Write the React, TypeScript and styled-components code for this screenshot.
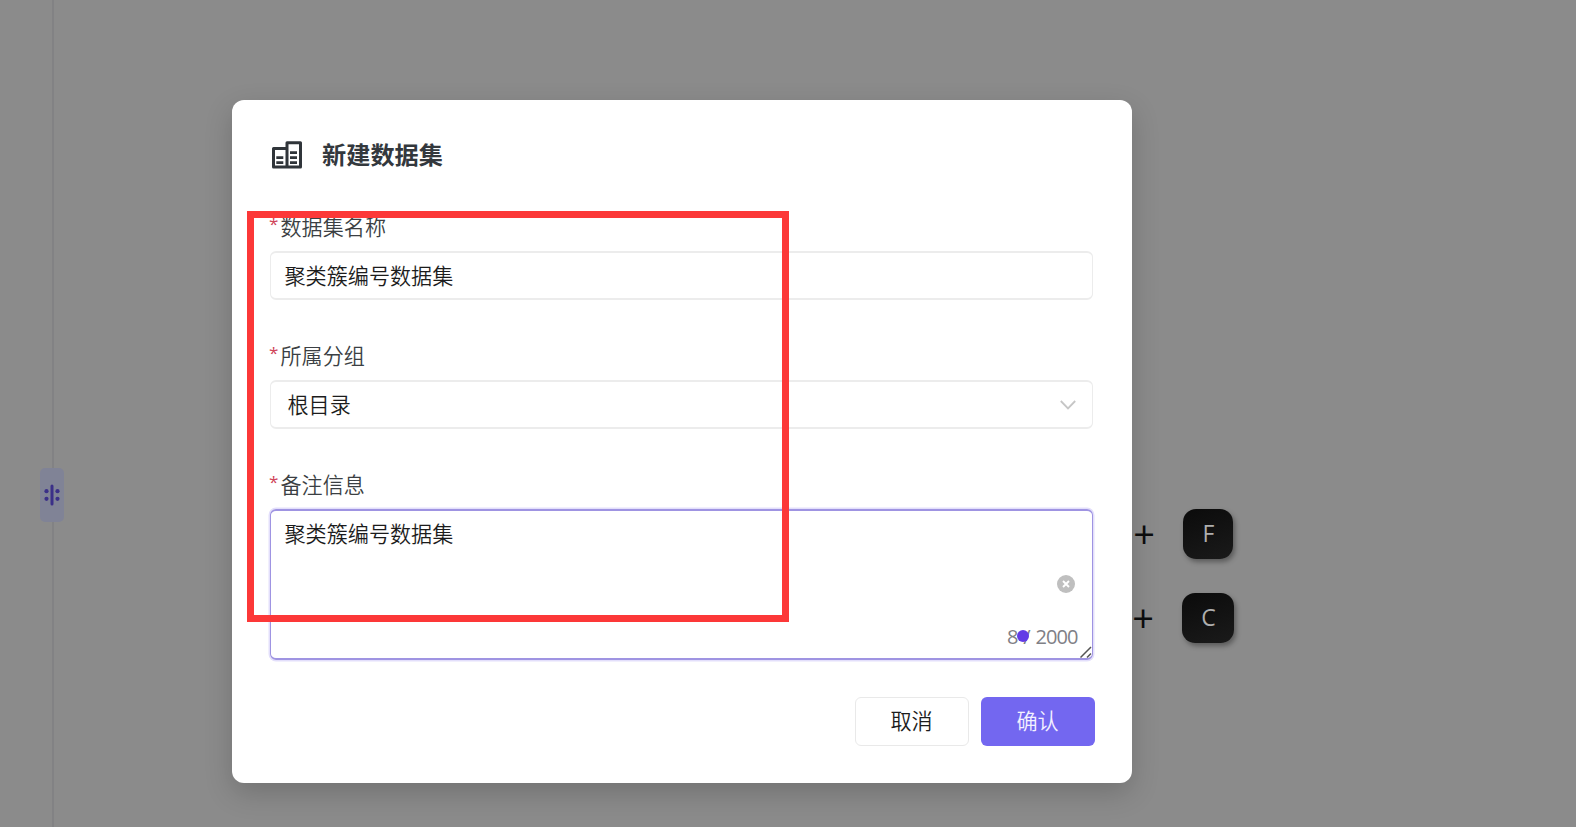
import React from 'react';
import styled, { createGlobalStyle } from 'styled-components';

const GlobalStyle = createGlobalStyle`
  *, *::before, *::after { box-sizing: border-box; }
  body {
    margin: 0;
    overflow: hidden;
    background: #8b8b8b;
    font-family: 'Open Sans', 'Noto Sans CJK SC', sans-serif;
  }
  button { font: inherit; }
`;

const Page = styled.div`
  position: relative;
  display: flex;
  width: 1576px;
  height: 827px;
  overflow: hidden;
  background: #8b8b8b;
`;

const Sidebar = styled.aside`
  position: relative;
  flex: none;
  width: 54px;
  border-right: 2px solid #828284;
`;

const ResizeHandle = styled.div`
  position: absolute;
  left: 40px;
  top: 468px;
  display: flex;
  align-items: center;
  justify-content: center;
  width: 24px;
  height: 54px;
  border-radius: 5px;
  background: #808396;
`;

const Workspace = styled.main`
  flex: 1;
  display: flex;
  flex-direction: column;
  align-items: flex-end;
  gap: 34px;
  padding: 509px 342px 0 0;
`;

const Shortcut = styled.div<{ $inset: number }>`
  display: flex;
  align-items: center;
  height: 50px;
  gap: 28px;
  padding-right: ${(p) => p.$inset}px;
`;

const Plus = styled.span`
  color: #0c0d0e;
  font-size: 38px;
  font-weight: 400;
  line-height: 50px;
  padding-bottom: 2px;
`;

const Key = styled.kbd<{ $width: number }>`
  display: flex;
  align-items: center;
  justify-content: center;
  width: ${(p) => p.$width}px;
  height: 50px;
  border-radius: 13px;
  background: linear-gradient(160deg, #0b0b0b, #1a1a1a);
  box-shadow: 2px 3px 5px rgba(0, 0, 0, 0.35);
  color: #aeaeae;
  font: 23px/50px 'Open Sans', sans-serif;
  padding: 0 0 3px 1px;
`;

const Overlay = styled.div`
  position: absolute;
  inset: 0;
  padding: 99.5px 0 0 232px;
`;

const Dialog = styled.section`
  display: flex;
  flex-direction: column;
  width: 900px;
  height: 683px;
  padding: 35.5px 37px 36.5px 38px;
  border-radius: 12px;
  background: #fff;
  box-shadow: 0 10px 28px rgba(0, 0, 0, 0.18);
`;

const Header = styled.header`
  display: flex;
  align-items: center;
  gap: 20px;
  height: 39px;
  padding-left: 2px;
`;

const Title = styled.h2`
  margin: 0;
  color: #33383d;
  font-size: 24.2px;
  line-height: 39px;
  font-weight: 700;
`;

const Form = styled.form`
  display: flex;
  flex-direction: column;
  flex: 1;
  padding-top: 37px;
`;

const Field = styled.div`
  display: flex;
  flex-direction: column;
  width: 823px;
  margin-bottom: 40px;

  &:last-child { margin-bottom: 0; }
`;

const Label = styled.label`
  display: flex;
  gap: 3px;
  height: 40px;
  color: #3b3f43;
  font-size: 21.1px;
  line-height: 32px;
  font-weight: 350;
`;

const Required = styled.span`
  width: 7.5px;
  color: #cf4458;
  font-size: 17px;
  line-height: 26px;
  text-indent: -1px;
  font-weight: 500;
`;

const Control = styled.div<{ $indent: number }>`
  display: flex;
  align-items: center;
  justify-content: space-between;
  height: 49px;
  padding: 0 16.5px 0 ${(p) => p.$indent}px;
  border: solid #ececec;
  border-width: 2px 1px;
  border-radius: 6px;
  color: #1c1c1c;
  font-size: 21.1px;
  line-height: 30px;
  font-weight: 350;
`;

const TextBox = styled.div`
  position: relative;
  height: 151px;
  padding: 8px 13.5px;
  border: solid #9f94e2;
  border-width: 2px 1px;
  border-radius: 6px;
  box-shadow: 0 0 0 1.5px #e3dffb;
  color: #1c1c1c;
  font-size: 21.1px;
  line-height: 30px;
  font-weight: 350;
`;

const Clear = styled.span`
  position: absolute;
  right: 17px;
  top: 64px;
  display: flex;
`;

const Counter = styled.span`
  position: absolute;
  right: 14.5px;
  bottom: 7px;
  color: #808086;
  font: 20px/28px 'Open Sans', sans-serif;
  letter-spacing: -0.95px;
  word-spacing: 1.6px;
`;

const PointerDot = styled.i`
  position: absolute;
  left: 746px;
  top: 118.5px;
  width: 12px;
  height: 12px;
  border-radius: 50%;
  background: #623be6;
`;

const Grip = styled.span`
  position: absolute;
  right: 0;
  bottom: 0;
  display: flex;
`;

const Footer = styled.footer`
  display: flex;
  justify-content: flex-end;
  gap: 12px;
`;

const Button = styled.button<{ $primary?: boolean }>`
  width: 114px;
  height: 49px;
  padding: 0 1px 1px 0;
  border: ${(p) => (p.$primary ? '0' : '1.5px solid #e9e9e9')};
  border-radius: 6px;
  background: ${(p) => (p.$primary ? '#7367f0' : '#fff')};
  color: ${(p) => (p.$primary ? '#f3f1ff' : '#1c1c1c')};
  font-size: 21.1px;
  font-weight: 350;
  line-height: 30px;
`;

const Highlight = styled.div`
  position: absolute;
  left: 247px;
  top: 211px;
  width: 542px;
  height: 411px;
  border: 7px solid #fc3838;
  pointer-events: none;
`;

const HandleIcon = () => (
  <svg width="16" height="22" viewBox="0 0 16 22" fill="#3b3088">
    <rect x="6.5" y="0.5" width="3" height="21" rx="1.5" />
    <circle cx="2.5" cy="7.2" r="2.1" />
    <circle cx="2.5" cy="14.8" r="2.1" />
    <circle cx="13.5" cy="7.2" r="2.1" />
    <circle cx="13.5" cy="14.8" r="2.1" />
  </svg>
);

const DatasetIcon = () => (
  <svg width="30" height="28" viewBox="0 0 30 28" fill="none" stroke="#30353a">
    <path d="M15 7.5H1.5v18.4h27V1.7H15v24.2" strokeWidth="3" strokeLinejoin="round" />
    <path d="M4.3 16.6h7M4.3 21.6h7M18 11.6h7M18 16.6h7M18 21.6h7" strokeWidth="2.7" />
  </svg>
);

export default function App() {
  return (
    <Page>
      <GlobalStyle />
      <Sidebar>
        <ResizeHandle><HandleIcon /></ResizeHandle>
      </Sidebar>
      <Workspace>
        <Shortcut $inset={1}>
          <Plus>+</Plus>
          <Key $width={50}>F</Key>
        </Shortcut>
        <Shortcut $inset={0}>
          <Plus>+</Plus>
          <Key $width={52}>C</Key>
        </Shortcut>
      </Workspace>
      <Overlay>
        <Dialog role="dialog">
          <Header>
            <DatasetIcon />
            <Title>新建数据集</Title>
          </Header>
          <Form>
            <Field>
              <Label><Required>*</Required>数据集名称</Label>
              <Control $indent={13.5}>聚类簇编号数据集</Control>
            </Field>
            <Field>
              <Label><Required>*</Required>所属分组</Label>
              <Control $indent={16.5}>
                根目录
                <svg width="16" height="10" viewBox="0 0 16 10" fill="none" stroke="#c6c6c6" strokeWidth="1.8">
                  <path d="M0.8 1l7.2 7.4L15.2 1" />
                </svg>
              </Control>
            </Field>
            <Field>
              <Label><Required>*</Required>备注信息</Label>
              <TextBox>
                聚类簇编号数据集
                <Clear>
                  <svg width="18" height="18" viewBox="0 0 18 18">
                    <circle cx="9" cy="9" r="9" fill="#bfbfbf" />
                    <path d="M6 6l6 6M12 6l-6 6" stroke="#fff" strokeWidth="1.9" />
                  </svg>
                </Clear>
                <Counter>8 / 2000</Counter>
                <PointerDot />
                <Grip>
                  <svg width="12" height="12" viewBox="0 0 12 12" stroke="#555" strokeWidth="1.5">
                    <path d="M0.5 11.5L11 1M7 11.5l4-4" />
                  </svg>
                </Grip>
              </TextBox>
            </Field>
          </Form>
          <Footer>
            <Button type="button">取消</Button>
            <Button type="button" $primary>确认</Button>
          </Footer>
        </Dialog>
      </Overlay>
      <Highlight />
    </Page>
  );
}
